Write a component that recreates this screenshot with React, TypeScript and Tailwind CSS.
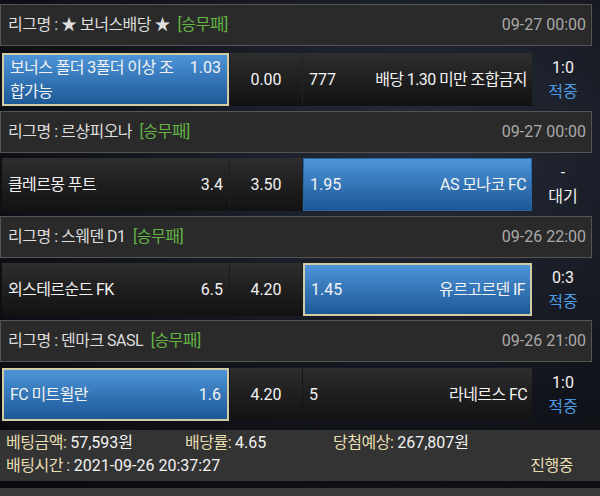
type Match = {
  league: string;
  date: string;
  home: string[];
  homeOdds: string;
  draw: string;
  awayOdds: string;
  away: string;
  pick: "home" | "away";
  framed: boolean;
  score: string;
  status: string;
  statusBlue: boolean;
  headerGap: string;
  rowGap: string;
};

const matches: Match[] = [
  {
    league: "★ 보너스배당 ★",
    date: "09-27 00:00",
    home: ["보너스 폴더 3폴더 이상 조", "합가능"],
    homeOdds: "1.03",
    draw: "0.00",
    awayOdds: "777",
    away: "배당 1.30 미만 조합금지",
    pick: "home",
    framed: true,
    score: "1:0",
    status: "적중",
    statusBlue: true,
    headerGap: "mt-[4px]",
    rowGap: "mt-[7px]",
  },
  {
    league: "르샹피오나",
    date: "09-27 00:00",
    home: ["클레르몽 푸트"],
    homeOdds: "3.4",
    draw: "3.50",
    awayOdds: "1.95",
    away: "AS 모나코 FC",
    pick: "away",
    framed: false,
    score: "-",
    status: "대기",
    statusBlue: false,
    headerGap: "mt-[5px]",
    rowGap: "mt-[5px]",
  },
  {
    league: "스웨덴 D1",
    date: "09-26 22:00",
    home: ["외스테르순드 FK"],
    homeOdds: "6.5",
    draw: "4.20",
    awayOdds: "1.45",
    away: "유르고르덴 IF",
    pick: "away",
    framed: true,
    score: "0:3",
    status: "적중",
    statusBlue: true,
    headerGap: "mt-[5px]",
    rowGap: "mt-[5px]",
  },
  {
    league: "덴마크 SASL",
    date: "09-26 21:00",
    home: ["FC 미트윌란"],
    homeOdds: "1.6",
    draw: "4.20",
    awayOdds: "5",
    away: "라네르스 FC",
    pick: "home",
    framed: true,
    score: "1:0",
    status: "적중",
    statusBlue: true,
    headerGap: "mt-[4px]",
    rowGap: "mt-[6px]",
  },
];

const darkCell = "bg-gradient-to-b from-[#2e2e2e] via-[#1f1f1f] to-[#121212]";
const blueCell = "bg-gradient-to-b from-[#4d95d8] via-[#3476b8] to-[#1d5896]";

function cellClass(selected: boolean, framed: boolean) {
  if (!selected) return darkCell;
  return `${blueCell} ${framed ? "border-2 border-[#d3cba4]" : "border border-[#2a66a3]"}`;
}

function LeagueHeader({ m }: { m: Match }) {
  return (
    <div
      className={`${m.headerGap} w-[592px] h-[42px] flex items-center justify-between bg-[#2a2a2a] border border-[#555555] pl-[7px] pr-[5px]`}
    >
      <div className="text-[16px] tracking-[-0.5px] text-[#dedede]">
        리그명 : {m.league} <span className="ml-[4px] text-[#64b446]">[승무패]</span>
      </div>
      <div className="text-[16px] text-[#a9a9a9]">{m.date}</div>
    </div>
  );
}

function MatchRow({ m }: { m: Match }) {
  return (
    <div className={`${m.rowGap} h-[53px] flex text-[16px] text-[#f2f2f2]`}>
      <div
        className={`ml-[2px] w-[227px] flex items-center pl-[6px] pr-[6px] ${cellClass(m.pick === "home", m.framed)}`}
      >
        <div className="flex w-full items-start justify-between leading-[24px]">
          <div className="tracking-[-0.6px]">
            {m.home.map((line) => (
              <div key={line}>{line}</div>
            ))}
          </div>
          <div>{m.homeOdds}</div>
        </div>
      </div>
      <div className={`ml-px w-[72px] flex items-center justify-center ${darkCell}`}>{m.draw}</div>
      <div
        className={`ml-px w-[229px] flex items-center justify-between pl-[6px] pr-[5px] ${cellClass(m.pick === "away", m.framed)}`}
      >
        <span>{m.awayOdds}</span>
        <span className="tracking-[-0.6px]">{m.away}</span>
      </div>
      <div className="w-[62px] flex flex-col items-center justify-center leading-[24px]">
        <span>{m.score}</span>
        <span className={m.statusBlue ? "text-[#4c9be2]" : "text-[#f2f2f2]"}>{m.status}</span>
      </div>
    </div>
  );
}

export default function App() {
  return (
    <div className="w-[600px] h-[496px] overflow-hidden bg-[radial-gradient(ellipse_at_70%_30%,#262c3a_0%,#12141b_55%,#08090d_100%)] font-[Roboto,'Noto_Sans_CJK_KR',sans-serif] flex flex-col">
      {matches.map((m, i) => (
        <div key={i} className="flex flex-col">
          <LeagueHeader m={m} />
          <MatchRow m={m} />
        </div>
      ))}
      <div className="mt-[9px] h-[52px] bg-[#333333] pl-[6px] pr-[27px] pt-[1px] text-[16px] leading-[23px]">
        <div className="flex">
          <div className="w-[179px]">
            <span className="text-[#e6ddb2] tracking-[-0.5px]">베팅금액:</span>{" "}
            <span className="text-[#f2f2f2]">57,593원</span>
          </div>
          <div className="w-[148px]">
            <span className="text-[#e6ddb2] tracking-[-0.5px]">배당률:</span>{" "}
            <span className="text-[#f2f2f2]">4.65</span>
          </div>
          <div>
            <span className="text-[#e6ddb2] tracking-[-0.5px]">당첨예상:</span>{" "}
            <span className="text-[#f2f2f2]">267,807원</span>
          </div>
        </div>
        <div className="flex justify-between">
          <div>
            <span className="text-[#e6ddb2] tracking-[-0.5px]">배팅시간 :</span>{" "}
            <span className="text-[#f2f2f2]">2021-09-26 20:37:27</span>
          </div>
          <span className="text-[#e6ddb2] tracking-[-0.5px]">진행중</span>
        </div>
      </div>
      <div className="mt-[7px] h-[8px] bg-[#3a3a3a]" />
    </div>
  );
}
